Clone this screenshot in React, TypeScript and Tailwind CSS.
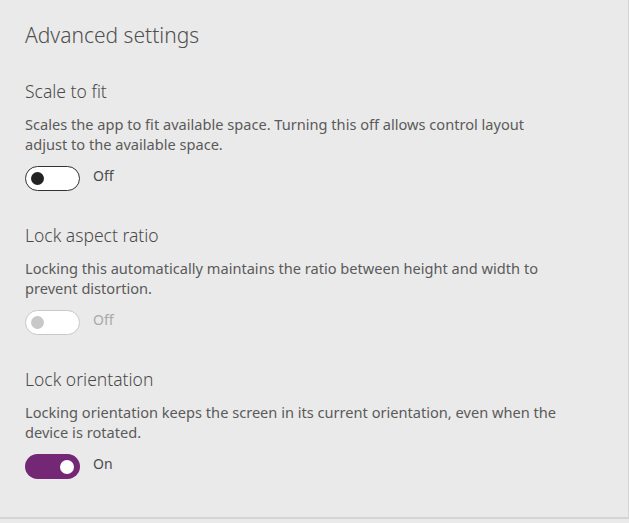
import React from "react";

function Toggle({ state }: { state: "off" | "disabled" | "on" }) {
  if (state === "on") {
    return (
      <div className="flex h-[25px] w-[55px] items-center justify-end rounded-full bg-[#742774] pr-[6px]">
        <div className="h-[14px] w-[14px] rounded-full bg-white" />
      </div>
    );
  }
  if (state === "disabled") {
    return (
      <div className="flex h-[25px] w-[55px] items-center rounded-full border border-[#c8c8c8] bg-white pl-[5px]">
        <div className="h-[13px] w-[13px] rounded-full bg-[#c8c8c8]" />
      </div>
    );
  }
  return (
    <div className="flex h-[25px] w-[55px] items-center rounded-full border border-[#333333] bg-white pl-[5px]">
      <div className="h-[13px] w-[13px] rounded-full bg-[#222222]" />
    </div>
  );
}

function Section({
  title,
  desc,
  state,
  label,
}: {
  title: string;
  desc: string;
  state: "off" | "disabled" | "on";
  label: string;
}) {
  return (
    <div className="flex flex-col">
      <div className="text-[17.5px] font-light leading-[24px] text-[#4a4a4a]">{title}</div>
      <div className="mt-[11px] w-[545px] text-[14.6px] leading-[20px] text-[#5a5a5a]">{desc}</div>
      <div className="mt-[12px] flex items-center gap-[13px]">
        <Toggle state={state} />
        <span
          className={
            "-mt-[5px] text-[14px] leading-[20px] " +
            (state === "disabled" ? "text-[#a8a8a8]" : "text-[#4a4a4a]")
          }
        >
          {label}
        </span>
      </div>
    </div>
  );
}

export default function App() {
  return (
    <div
      className="h-[523px] w-[629px] bg-[#eaeaea]"
      style={{ fontFamily: '"Segoe UI", "Noto Sans", "Open Sans", sans-serif' }}
    >
      <div className="h-[519px] border-b-2 border-r border-[#d4d4d4] px-[25px] pt-[21px]">
        <div className="text-[21px] font-light leading-[28px] text-[#505050]">Advanced settings</div>
        <div className="mt-[30px] flex flex-col gap-[32px]">
          <Section
            title="Scale to fit"
            desc="Scales the app to fit available space. Turning this off allows control layout adjust to the available space."
            state="off"
            label="Off"
          />
          <Section
            title="Lock aspect ratio"
            desc="Locking this automatically maintains the ratio between height and width to prevent distortion."
            state="disabled"
            label="Off"
          />
          <Section
            title="Lock orientation"
            desc="Locking orientation keeps the screen in its current orientation, even when the device is rotated."
            state="on"
            label="On"
          />
        </div>
      </div>
    </div>
  );
}
